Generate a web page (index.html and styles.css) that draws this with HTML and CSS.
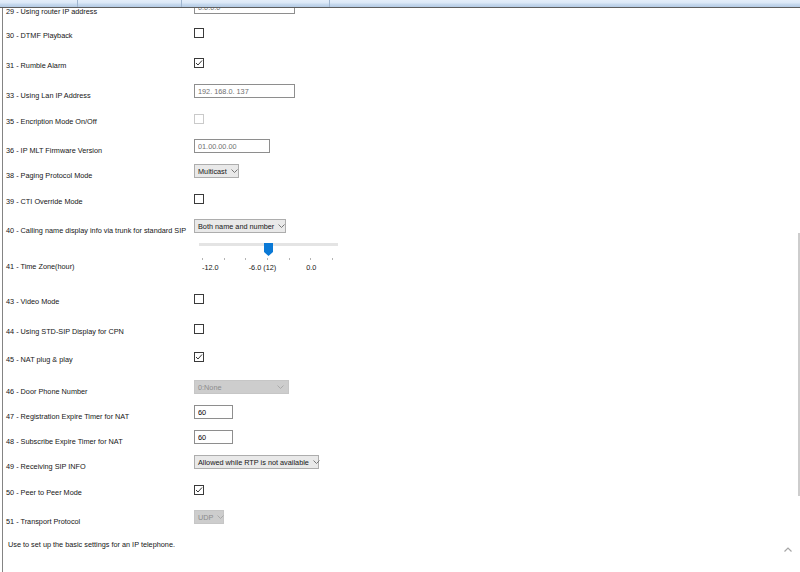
FILE: index.html
```html
<!DOCTYPE html>
<html lang="en">
<head>
    <meta charset="UTF-8">
    <title>IP Telephone Basic Settings</title>
    <link rel="stylesheet" href="styles.css">
</head>
<body>

<div class="tabs">
    <div class="tab scripts"></div>
    <div class="tab features"></div>
    <div class="tab maintenance"></div>
</div>

<div class="panel">
    <div class="settings">
        <div class="label">29 - Using router IP address</div>
        <div class="field"><input class="text ip" value="0.0.0.0" readonly></div>

        <div class="label">30 - DTMF Playback</div>
        <div class="field"><span class="box"></span></div>

        <div class="label">31 - Rumble Alarm</div>
        <div class="field"><span class="box"><svg width="8" height="8" viewBox="0 0 8 8"><path d="M1 4 L3 6 L7 1.5" fill="none" stroke="#333" stroke-width="1"/></svg></span></div>

        <div class="label">33 - Using Lan IP Address</div>
        <div class="field"><input class="text ip" value="192. 168.0. 137" readonly></div>

        <div class="label">35 - Encription Mode On/Off</div>
        <div class="field"><span class="box off"></span></div>

        <div class="label">36 - IP MLT Firmware Version</div>
        <div class="field"><input class="text version" value="01.00.00.00" readonly></div>

        <div class="label">38 - Paging Protocol Mode</div>
        <div class="field"><span class="select paging">Multicast<svg class="chev" width="7" height="4" viewBox="0 0 7 4"><path d="M0.5 0.5 L3.5 3.5 L6.5 0.5" fill="none" stroke="#777"/></svg></span></div>

        <div class="label">39 - CTI Override Mode</div>
        <div class="field"><span class="box"></span></div>

        <div class="label">40 - Calling name display info via trunk for standard SIP</div>
        <div class="field"><span class="select calling">Both name and number<svg class="chev" width="7" height="4" viewBox="0 0 7 4"><path d="M0.5 0.5 L3.5 3.5 L6.5 0.5" fill="none" stroke="#777"/></svg></span></div>

        <div class="label">41 - Time Zone(hour)</div>
        <div class="field slider-field">
            <div class="slider">
                <div class="track-area">
                    <div class="track"></div>
                    <svg class="thumb" width="9" height="13" viewBox="0 0 9 13"><polygon points="0,0 9,0 9,9 4.5,13 0,9" fill="#0a79d6"/></svg>
                </div>
                <div class="ticks">
                    <span></span><span></span><span></span><span></span><span></span><span></span><span></span>
                </div>
                <div class="scale">
                    <span>-12.0</span><span>-6.0 (12)</span><span>0.0</span>
                </div>
            </div>
        </div>

        <div class="label">43 - Video Mode</div>
        <div class="field"><span class="box"></span></div>

        <div class="label">44 - Using STD-SIP Display for CPN</div>
        <div class="field"><span class="box"></span></div>

        <div class="label">45 - NAT plug &amp; play</div>
        <div class="field"><span class="box"><svg width="8" height="8" viewBox="0 0 8 8"><path d="M1 4 L3 6 L7 1.5" fill="none" stroke="#333" stroke-width="1"/></svg></span></div>

        <div class="label">46 - Door Phone Number</div>
        <div class="field"><span class="select door disabled">0:None<svg class="chev" width="7" height="4" viewBox="0 0 7 4"><path d="M0.5 0.5 L3.5 3.5 L6.5 0.5" fill="none" stroke="#aaa"/></svg></span></div>

        <div class="label">47 - Registration Expire Timer for NAT</div>
        <div class="field"><input class="text short" value="60"></div>

        <div class="label">48 - Subscribe Expire Timer for NAT</div>
        <div class="field"><input class="text short" value="60"></div>

        <div class="label">49 - Receiving SIP INFO</div>
        <div class="field"><span class="select sipinfo">Allowed while RTP is not available<svg class="chev" width="7" height="4" viewBox="0 0 7 4"><path d="M0.5 0.5 L3.5 3.5 L6.5 0.5" fill="none" stroke="#777"/></svg></span></div>

        <div class="label">50 - Peer to Peer Mode</div>
        <div class="field"><span class="box"><svg width="8" height="8" viewBox="0 0 8 8"><path d="M1 4 L3 6 L7 1.5" fill="none" stroke="#333" stroke-width="1"/></svg></span></div>

        <div class="label">51 - Transport Protocol</div>
        <div class="field"><span class="select transport disabled">UDP<svg class="chev" width="7" height="4" viewBox="0 0 7 4"><path d="M0.5 0.5 L3.5 3.5 L6.5 0.5" fill="none" stroke="#aaa"/></svg></span></div>
    </div>

    <p class="help">Use to set up the basic settings for an IP telephone.</p>

    <div class="scroll-thumb"></div>
    <svg class="scroll-up" width="8" height="5" viewBox="0 0 8 5"><path d="M0.5 4.5 L4 1 L7.5 4.5" fill="none" stroke="#a6a6a6" stroke-width="1.2"/></svg>
</div>

</body>
</html>
```

FILE: styles.css
```css
body {
    margin: 0;
    font-family: "Liberation Sans", Arial, sans-serif;
    font-size: 7.3px;
    color: #161616;
    background: #fff;
    overflow: hidden;
}

/* tab strip, scrolled almost out of view */
.tabs {
    display: flex;
    height: 7px;
    background: linear-gradient(#e4eefa 0, #dbe8f7 3px, #c9dbef 4px, #b4cbe5 7px);
    border-bottom: 1px solid #5e5e5e;
}

.tab {
    border-right: 1px solid #9fb5cf;
}

.tab.scripts { width: 77px; }
.tab.features { width: 103px; }
.tab.maintenance { width: 147px; }

.panel {
    position: relative;
    height: 564px;
    margin-left: 2px;
    border-left: 1px solid #848484;
    overflow: hidden;
}

.settings {
    display: grid;
    grid-template-columns: 188px auto;
    grid-template-rows: 23px 24px 30px 30px 26px 29px 25px 26px 29px 36px 35px 30px 28px 32px 25px 25px 25px 26px 29px;
    margin-top: -17px;
    padding-left: 3px;
}

.label {
    align-self: end;
    margin-bottom: -2px;
    line-height: 9px;
    white-space: nowrap;
}

.field {
    align-self: end;
    display: flex;
    align-items: flex-start;
    height: 14px;
}

.text {
    box-sizing: border-box;
    height: 14px;
    margin: 0;
    padding: 0 3px;
    border: 1px solid #8e8e8e;
    font: inherit;
    line-height: 11px;
    color: #000;
    outline: none;
}

.text.ip { width: 101px; color: #707070; }
.text.version { width: 76px; color: #707070; }
.text.short { width: 39px; }

.box {
    display: flex;
    align-items: center;
    justify-content: center;
    box-sizing: border-box;
    width: 10px;
    height: 10px;
    margin-top: 4px;
    border: 1px solid #3a3a3a;
    background: #fff;
}

.box.off {
    border-color: #cacaca;
}

.select {
    display: flex;
    align-items: center;
    justify-content: space-between;
    box-sizing: border-box;
    height: 14px;
    padding: 0 4px 0 3px;
    border: 1px solid #adadad;
    background: #e9e9e9;
    white-space: nowrap;
}

.select.disabled {
    background: #cdcdcd;
    border-color: #c6c6c6;
    color: #8c8c8c;
}

.select.paging { width: 45px; }
.select.calling { width: 92px; }
.select.door { width: 95px; }
.select.sipinfo { width: 125px; }
.select.transport { width: 30px; }

.chev {
    flex: none;
    margin-left: 4px;
}

.slider-field {
    display: block;
    height: auto;
    margin-bottom: -3px;
}

.slider {
    width: 139px;
    margin-left: 5px;
}

.track-area {
    position: relative;
    height: 14px;
}

.track {
    height: 3px;
    margin-top: 4px;
    background: #e4e4e4;
}

.thumb {
    position: absolute;
    left: 65px;
    top: 0;
}

.ticks {
    display: flex;
    justify-content: space-between;
    height: 2px;
    margin-top: 1px;
    padding: 0 5px 0 3px;
}

.ticks span {
    width: 1px;
    background: #b4b4b4;
}

.scale {
    display: flex;
    gap: 30px;
    margin-top: 3px;
    padding-left: 3px;
    line-height: 9px;
    white-space: nowrap;
}

.help {
    margin: 16px 0 0 5px;
    line-height: 9px;
}

.scroll-thumb {
    position: absolute;
    right: 0;
    top: 225px;
    width: 2px;
    height: 263px;
    background: #cdcdcd;
}

.scroll-up {
    position: absolute;
    right: 8px;
    top: 539px;
}
```
